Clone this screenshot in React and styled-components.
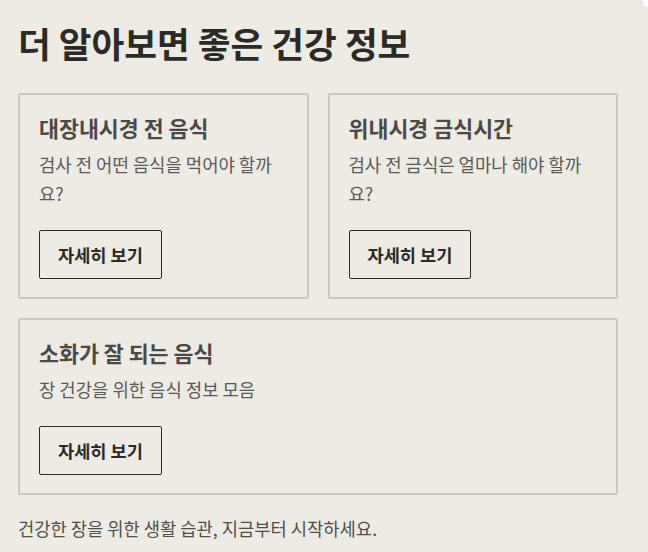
import React from 'react';
import styled, { createGlobalStyle } from 'styled-components';

const GlobalStyle = createGlobalStyle`
  html, body {
    margin: 0;
    padding: 0;
    background: #eeebe5;
  }
  body {
    font-family: "Noto Sans CJK KR", "Noto Sans", sans-serif;
    color: #2b2a27;
  }
`;

const Page = styled.main`
  width: 600px;
  padding: 21px 0 0 18px;
`;

// corner of a floating widget peeking in from off-screen
const CornerTab = styled.div`
  position: fixed;
  top: -6px;
  right: -10px;
  width: 15px;
  height: 13px;
  border-radius: 4px;
  background: #ffffff;
`;

const PageTitle = styled.h2`
  margin: 0 0 28px;
  font-size: 35.6px;
  line-height: 44px;
  font-weight: 700;
  color: #2b2a27;
`;

const CardGrid = styled.div`
  display: grid;
  grid-template-columns: 1fr 1fr;
  gap: 19px;
`;

const Card = styled.section`
  grid-column: ${(p) => (p.$wide ? '1 / -1' : 'auto')};
  border: 2px solid #cdc8bb;
  border-radius: 2px;
  padding: 18px 18px 18px 19px;
`;

const CardTitle = styled.h3`
  margin: 0 0 8px;
  font-size: 21.7px;
  line-height: 29px;
  font-weight: 700;
  color: #4a4945;
`;

const CardText = styled.p`
  margin: 0 0 22px;
  font-size: 17.8px;
  line-height: 29px;
  color: #5a5955;
`;

const MoreButton = styled.button`
  display: block;
  height: 49px;
  padding: 0 18px;
  border: 1px solid #2b2a27;
  border-radius: 2px;
  background: transparent;
  font-family: inherit;
  font-size: 17.6px;
  font-weight: 700;
  color: #2b2a27;
  cursor: pointer;
`;

const Footer = styled.p`
  margin: 20px 0 0;
  font-size: 17.7px;
  line-height: 26px;
  color: #4f4e4a;
`;

const cards = [
  { title: '대장내시경 전 음식', text: '검사 전 어떤 음식을 먹어야 할까요?' },
  { title: '위내시경 금식시간', text: '검사 전 금식은 얼마나 해야 할까요?' },
  { title: '소화가 잘 되는 음식', text: '장 건강을 위한 음식 정보 모음', wide: true },
];

export default function App() {
  return (
    <>
      <GlobalStyle />
      <CornerTab />
      <Page>
        <PageTitle>더 알아보면 좋은 건강 정보</PageTitle>
        <CardGrid>
          {cards.map((c) => (
            <Card key={c.title} $wide={c.wide}>
              <CardTitle>{c.title}</CardTitle>
              <CardText>{c.text}</CardText>
              <MoreButton>자세히 보기</MoreButton>
            </Card>
          ))}
        </CardGrid>
        <Footer>건강한 장을 위한 생활 습관, 지금부터 시작하세요.</Footer>
      </Page>
    </>
  );
}
